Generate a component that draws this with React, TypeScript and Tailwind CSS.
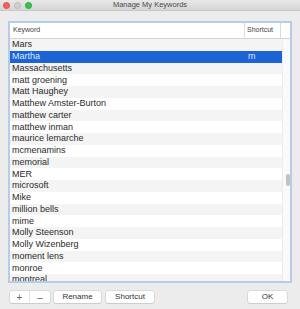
import React from 'react';

const keywords = [
  'Mars',
  'Martha',
  'Massachusetts',
  'matt groening',
  'Matt Haughey',
  'Matthew Amster-Burton',
  'matthew carter',
  'matthew inman',
  'maurice lemarche',
  'mcmenamins',
  'memorial',
  'MER',
  'microsoft',
  'Mike',
  'million bells',
  'mime',
  'Molly Steenson',
  'Molly Wizenberg',
  'moment lens',
  'monroe',
  'montreal',
];

const shortcuts: Record<string, string> = { Martha: 'm' };

const App: React.FC = () => {
  return (
    <div className="w-[300px] h-[309px] bg-[#ececec] flex flex-col overflow-hidden font-['Liberation_Sans',sans-serif] text-[#222]">
      {/* Title bar */}
      <div className="h-[11px] flex items-center relative bg-gradient-to-b from-[#e9e8e9] to-[#d6d5d6] border-b border-[#c8c8c8]">
        <div className="flex items-center gap-[4px] pl-[3px]">
          <span className="w-[7px] h-[7px] rounded-full bg-[#fc605c] border border-[#de4a46]" />
          <span className="w-[7px] h-[7px] rounded-full bg-[#d0d0d0] border border-[#bdbdbd]" />
          <span className="w-[7px] h-[7px] rounded-full bg-[#34c84a] border border-[#26a93a]" />
        </div>
        <div className="absolute inset-0 flex items-center justify-center text-[7.5px] text-[#4a4a4a]">
          Manage My Keywords
        </div>
      </div>

      {/* Table */}
      <div className="mx-[8px] mt-[10px] h-[262px] border-2 border-[#b5cced] bg-white flex flex-col overflow-hidden">
        <div className="h-[16px] flex text-[7px] text-[#444] border-b border-[#d5d5d5] shrink-0">
          <div className="w-[235px] pl-[3px] flex items-center border-r border-[#dcdcdc]">Keyword</div>
          <div className="w-[36px] pl-[2px] flex items-center border-r border-[#dcdcdc]">Shortcut</div>
          <div className="flex-1" />
        </div>
        <div className="flex flex-1 overflow-hidden">
          <div className="w-[272px] flex flex-col">
            {keywords.map((k, i) => {
              const selected = k === 'Martha';
              return (
                <div
                  key={k}
                  className={`h-[11.75px] shrink-0 flex items-center text-[9px] ${
                    selected
                      ? 'bg-[#1c63d5] text-[#dbe8ff]'
                      : i % 2 === 0
                        ? 'bg-[#f4f4f4] text-[#2a2a2a]'
                        : 'bg-white text-[#2a2a2a]'
                  }`}
                >
                  <div className="w-[236px] pl-[2px] leading-none">{k}</div>
                  <div className="pl-[2px] leading-none">{shortcuts[k] ?? ''}</div>
                </div>
              );
            })}
          </div>
          <div className="flex-1 bg-[#fafafa] border-l border-[#ececec] relative">
            <div className="absolute left-[3px] top-[135px] w-[4px] h-[12px] rounded-full bg-[#c2c2c2]" />
          </div>
        </div>
      </div>

      {/* Buttons */}
      <div className="flex items-center mt-[8px] px-[10px] text-[8px] text-[#333]">
        <div className="flex bg-white rounded-[2px] shadow-[0_0_0_0.5px_#c8c8c8,0_1px_1px_rgba(0,0,0,0.12)]">
          <div className="w-[20px] h-[12px] flex items-center justify-center text-[10px] text-[#666] border-r border-[#e2e2e2]">+</div>
          <div className="w-[20px] h-[12px] flex items-center justify-center text-[10px] text-[#666]">–</div>
        </div>
        <div className="ml-[4px] w-[47px] h-[12px] flex items-center justify-center bg-white rounded-[2px] shadow-[0_0_0_0.5px_#c8c8c8,0_1px_1px_rgba(0,0,0,0.12)]">
          Rename
        </div>
        <div className="ml-[5px] w-[48px] h-[12px] flex items-center justify-center bg-white rounded-[2px] shadow-[0_0_0_0.5px_#c8c8c8,0_1px_1px_rgba(0,0,0,0.12)]">
          Shortcut
        </div>
        <div className="ml-auto mr-[3px] w-[39px] h-[12px] flex items-center justify-center bg-white rounded-[2px] shadow-[0_0_0_0.5px_#c8c8c8,0_1px_1px_rgba(0,0,0,0.12)]">
          OK
        </div>
      </div>
    </div>
  );
};

export default App;
